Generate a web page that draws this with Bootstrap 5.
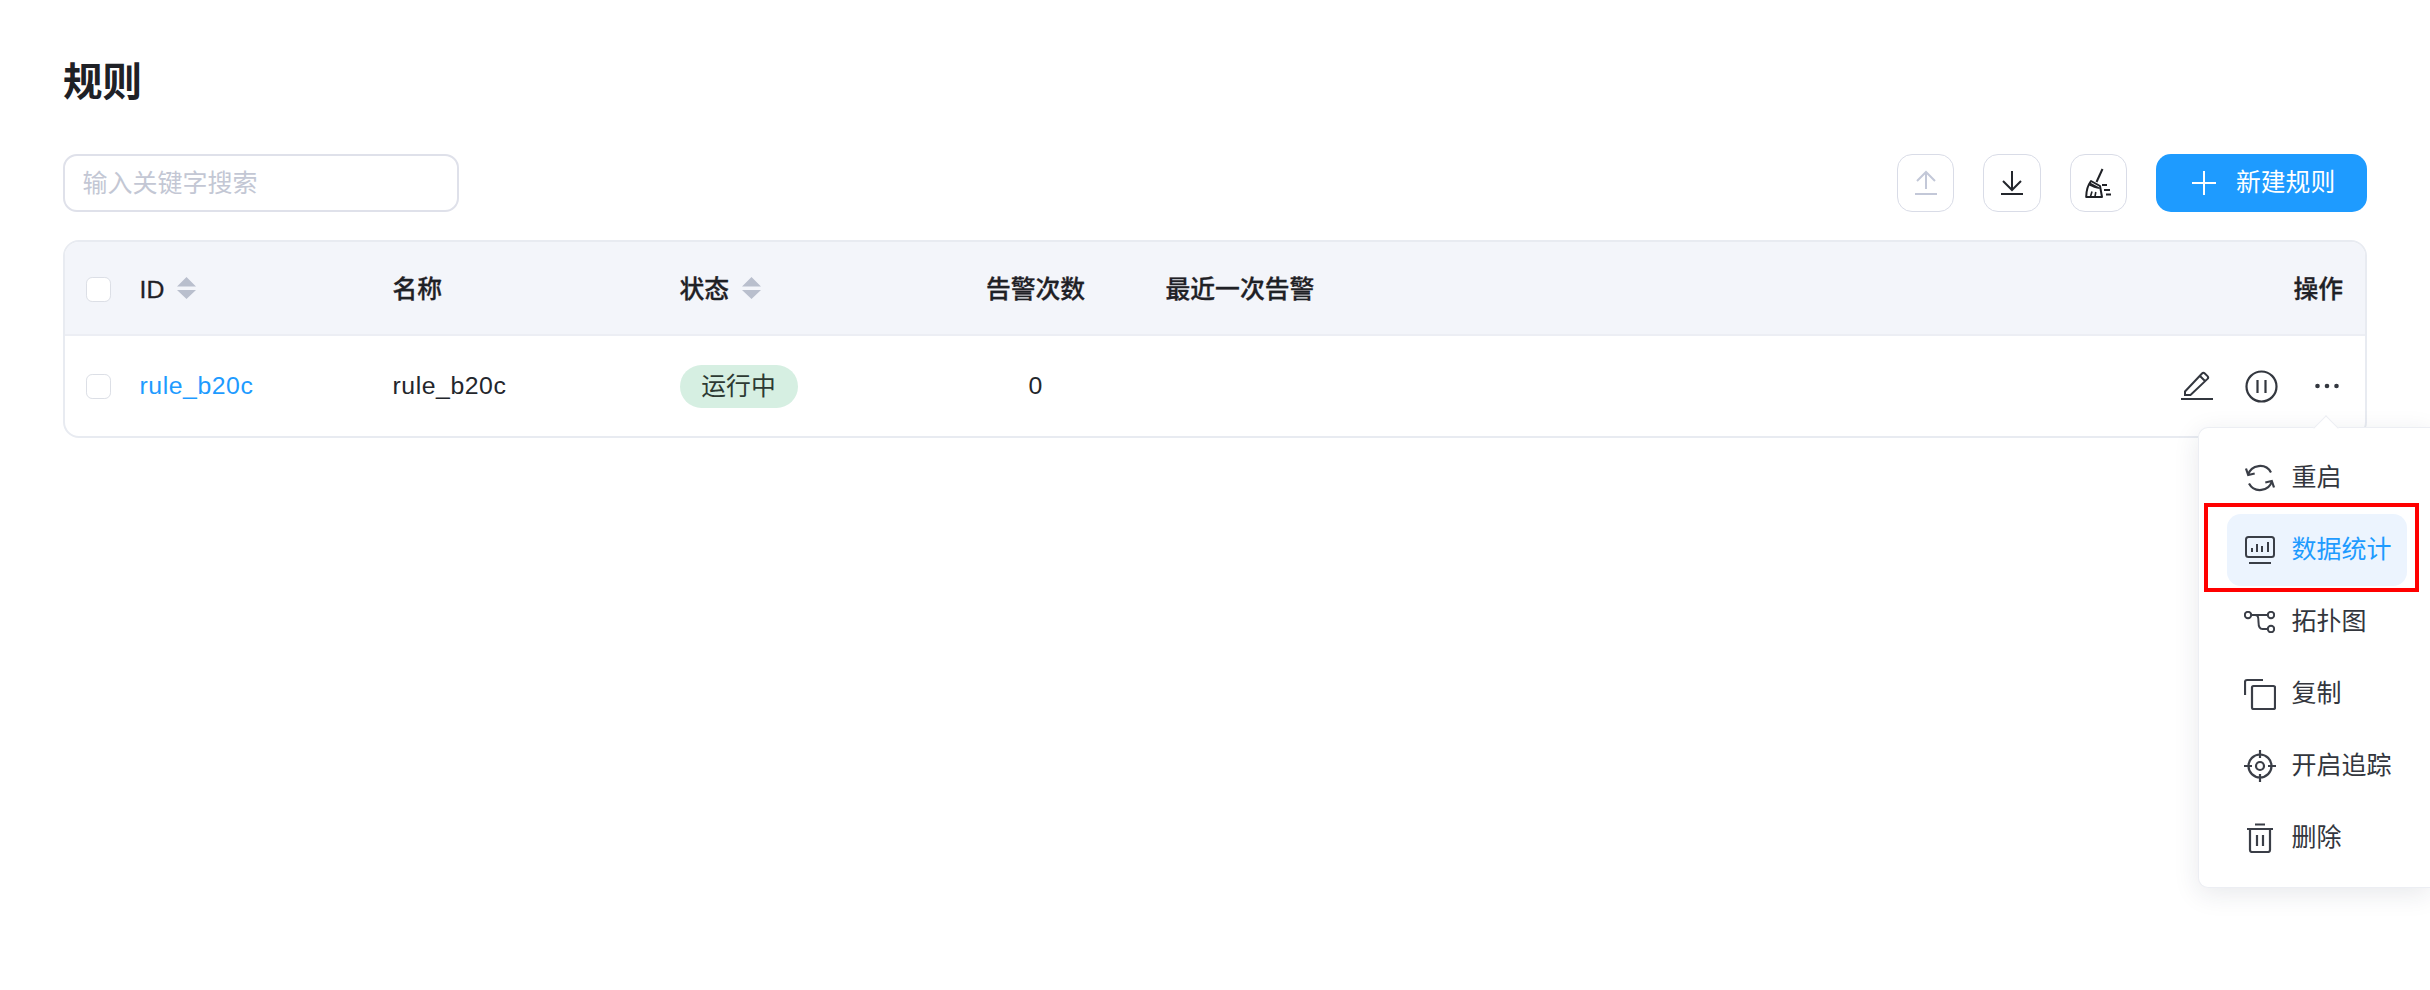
<!DOCTYPE html>
<html lang="zh">
<head>
<meta charset="utf-8">
<title>规则</title>
<link href="https://cdn.jsdelivr.net/npm/bootstrap@5.3.0/dist/css/bootstrap.min.css" rel="stylesheet">
<style>
html,body{height:100%;}
body{font-family:"Liberation Sans","Noto Sans CJK SC",sans-serif;font-size:24.8px;color:#23262c;background:#fff;overflow:hidden;}
.rule-page{position:relative;height:990px;padding:57px 63px 0;}
.rule-title{font-size:39.500px;line-height:50px;font-weight:700;margin:0 0 47px;color:#1f2126;}
.rule-toolbar{height:58px;margin-bottom:28px;}
.rule-search{width:396px;height:58px;border:2px solid #dfe1ea;border-radius:14px;font-size:25px;padding:0 17.500px;color:#23262c;box-shadow:none;}
.rule-search::placeholder{color:#c3c7d4;}
.tool-group{gap:29px;}
.tool-btn{width:57px;height:58px;padding:0;border:1.5px solid #d9dce7;border-radius:15px;background:#fff;display:flex;align-items:center;justify-content:center;}
.tool-wide{width:58px;}
.new-btn{height:58px;width:211px;padding:0 0 0 36px;border:0;border-radius:15px;background:#1e9bff;color:#fff;font-size:24.8px;display:flex;align-items:center;gap:20px;}
.rule-table-wrap{border:2px solid #e8ebf1;border-radius:16px;overflow:hidden;}
.rule-table{margin:0;table-layout:fixed;width:100%;font-size:24.8px;}
.rule-table>thead>tr>th{height:93px;background:#f3f5fa;border-bottom:2px solid #eceef4;font-weight:500;padding:3px 22px 0;vertical-align:middle;color:#1f2126;box-shadow:none;-webkit-text-stroke:.3px #1f2126;}
.rule-table>tbody>tr>td{height:101px;border:0;padding:0 22px;vertical-align:middle;color:#23262c;box-shadow:none;}
.rule-table .cb-col{padding:0 0 0 21px!important;}
.rule-table th.cb-col{padding-top:3px!important;}
.col-a{width:52.500px;}.col-b{width:253px;}.col-c{width:287px;}.col-d{width:306px;}.col-e{width:180px;}
.cell-count{padding-right:58px!important;}
.cell-ops{width:260px;}
.rule-cb{width:25px;height:25px;margin:0;display:block;border:1.5px solid #dcdfe6;border-radius:4px;float:none;}
.latin{letter-spacing:.55px;}
.id-link{color:#1e9bff;text-decoration:none;}
.sort-ico{display:inline-block;vertical-align:-1px;margin-left:13px;}
.state-pill{display:inline-block;background:#d6efe2;color:#2d3a33;font-weight:400;font-size:24.8px;line-height:43px;height:43px;width:118px;text-align:center;padding:0;border-radius:22px;}
.row-actions{padding-right:4px;}
.act-ico{display:block;flex:none;}
.act-edit{margin-right:32px;margin-top:-3px;}
.act-pause{margin-right:37px;}
.pop-menu{position:absolute;left:2198px;right:0;top:427px;height:461px;padding:14px 23px 0 0;margin:0;border:1px solid #eceef3;border-right:0;border-radius:10px 0 0 10px;background:#fff;box-shadow:0 6px 26px rgba(30,40,70,.1);display:block;min-width:0;}
.pop-arrow{position:absolute;left:118px;top:-9px;width:18px;height:18px;background:#fff;transform:rotate(45deg);border-top:1px solid #eceef3;border-left:1px solid #eceef3;}
.pop-item{position:relative;height:72px;margin-left:28px;width:auto;padding:0 0 0 16.500px;display:flex;align-items:center;gap:16px;font-size:25px;color:#33363d;border-radius:14px;background:transparent;}
.pi-ico{flex:none;width:32px;display:flex;justify-content:center;}
.pop-item.hot{background:#ecf4fe;color:#1e9bff;}
.red-box{position:absolute;left:-23px;right:-12px;top:-11px;bottom:-6px;border:4px solid #ff0000;pointer-events:none;}
</style>
</head>
<body>
<div class="rule-page">
  <h1 class="rule-title">规则</h1>
  <div class="rule-toolbar d-flex justify-content-between align-items-center">
    <input class="form-control rule-search" type="text" placeholder="输入关键字搜索">
    <div class="d-flex align-items-center tool-group">
      <button class="btn tool-btn" type="button" aria-label="上传">
        <svg width="24" height="26" viewBox="0 0 24 26" fill="none" stroke="#c3c8d8" stroke-width="2"><path d="M12 19V2M3 11l9-9 9 9M1 24h22"/></svg>
      </button>
      <button class="btn tool-btn tool-wide" type="button" aria-label="下载">
        <svg width="24" height="26" viewBox="0 0 24 26" fill="none" stroke="#23262c" stroke-width="2"><path d="M12 1v19M3 11l9 9 9-9M1 24h22"/></svg>
      </button>
      <button class="btn tool-btn" type="button" aria-label="清空">
        <svg width="28" height="30" viewBox="0 0 28 30" fill="none" stroke="#1f2126" stroke-width="2"><path d="M17.500 1l-6 13"/><path d="M6 13l9 5 2 11H1.200C1.200 23 3 17 6 13z" stroke-linejoin="round"/><path d="M5 14.500l9.500 5 .3 1.500C11 20.500 7 19 4 17.500z" fill="#1f2126" stroke="none"/><path d="M5.500 28.500l1.500-5M10 28.500l.8-4.500" stroke-width="1.600"/><path d="M17 17h5M19 22h6M21 26.500h5"/></svg>
      </button>
      <button class="btn new-btn" type="button">
        <svg width="24" height="24" viewBox="0 0 24 24" fill="none" stroke="#fff" stroke-width="2"><path d="M12 0v24M0 12h24"/></svg>
        <span>新建规则</span>
      </button>
    </div>
  </div>
  <div class="rule-table-wrap">
    <table class="table rule-table">
      <colgroup><col class="col-a"><col class="col-b"><col class="col-c"><col class="col-d"><col class="col-e"><col><col class="cell-ops"></colgroup>
      <thead>
        <tr>
          <th class="cb-col"><input class="form-check-input rule-cb" type="checkbox" aria-label="全选"></th>
          <th>ID<svg class="sort-ico" width="19" height="22" viewBox="0 0 19 22" fill="#b9bfcd"><path d="M9.500 0L19 9.500H0zM0 13h19l-9.500 9z"/></svg></th>
          <th>名称</th>
          <th>状态<svg class="sort-ico" width="19" height="22" viewBox="0 0 19 22" fill="#b9bfcd"><path d="M9.500 0L19 9.500H0zM0 13h19l-9.500 9z"/></svg></th>
          <th class="text-center cell-count">告警次数</th>
          <th>最近一次告警</th>
          <th class="text-end">操作</th>
        </tr>
      </thead>
      <tbody>
        <tr>
          <td class="cb-col"><input class="form-check-input rule-cb" type="checkbox" aria-label="选择"></td>
          <td><a class="id-link latin" href="#">rule_b20c</a></td>
          <td class="latin">rule_b20c</td>
          <td><span class="badge state-pill">运行中</span></td>
          <td class="text-center cell-count">0</td>
          <td></td>
          <td>
            <div class="d-flex justify-content-end align-items-center row-actions">
              <svg class="act-ico act-edit" width="32" height="30" viewBox="0 0 32 30" fill="none" stroke="#33373f" stroke-width="2"><path d="M4 21.500L21 3.500a2 2 0 0 1 2.800 0l2.700 2.600a2 2 0 0 1 0 2.800L9.500 25H4zM19 6l5.500 5.500M0 29h32"/></svg>
              <svg class="act-ico act-pause" width="33" height="33" viewBox="0 0 33 33" fill="none" stroke="#33373f" stroke-width="2.200"><circle cx="16.500" cy="16.500" r="15"/><path d="M12.500 10v13M20.500 10v13"/></svg>
              <svg class="act-ico" width="24" height="6" viewBox="0 0 24 6" fill="#33373f"><circle cx="2.500" cy="3" r="2.300"/><circle cx="12" cy="3" r="2.300"/><circle cx="21.500" cy="3" r="2.300"/></svg>
            </div>
          </td>
        </tr>
      </tbody>
    </table>
  </div>
  <div class="dropdown-menu pop-menu">
    <span class="pop-arrow"></span>
    <div class="dropdown-item pop-item">
      <span class="pi-ico"><svg width="30" height="30" viewBox="0 0 30 30" fill="none" stroke="#3a3e47" stroke-width="2.200"><path d="M3 12A12.500 12.500 0 0 1 26 9.500M27 18A12.500 12.500 0 0 1 4 20.500"/><path d="M1 5.500L3.200 12l6.500-1.500M29 24.500L26.800 18l-6.500 1.500"/></svg></span>
      <span>重启</span>
    </div>
    <div class="dropdown-item pop-item hot">
      <span class="pi-ico"><svg width="30" height="28" viewBox="0 0 30 28" fill="none" stroke="#3a3e47" stroke-width="2"><rect x="1" y="1" width="28" height="20" rx="2.500"/><path d="M7 16v-4M12 16V8M17 16v-6M23 16V6M4 27h22"/></svg></span>
      <span>数据统计</span>
      <span class="red-box"></span>
    </div>
    <div class="dropdown-item pop-item">
      <span class="pi-ico"><svg width="31" height="22" viewBox="0 0 31 22" fill="none" stroke="#3a3e47" stroke-width="2"><circle cx="4" cy="4" r="3.200"/><circle cx="27" cy="4" r="3.200"/><circle cx="27" cy="18" r="3.200"/><path d="M7.200 4h16.600M11 4c3 0 3.500 2 3.500 7s1 7 4 7h5.300"/></svg></span>
      <span>拓扑图</span>
    </div>
    <div class="dropdown-item pop-item">
      <span class="pi-ico"><svg width="32" height="32" viewBox="0 0 32 32" fill="none" stroke="#3a3e47" stroke-width="2.200"><path d="M1 17V4a2 2 0 0 1 2-2h16"/><rect x="8" y="8" width="23" height="23" rx="1.500"/></svg></span>
      <span>复制</span>
    </div>
    <div class="dropdown-item pop-item">
      <span class="pi-ico"><svg width="32" height="32" viewBox="0 0 32 32" fill="none" stroke="#3a3e47" stroke-width="2.200"><circle cx="16" cy="16" r="11.500"/><circle cx="16" cy="16" r="4"/><path d="M16 0v8M16 24v8M0 16h8M24 16h8"/></svg></span>
      <span>开启追踪</span>
    </div>
    <div class="dropdown-item pop-item">
      <span class="pi-ico"><svg width="30" height="30" viewBox="0 0 30 30" fill="none" stroke="#3a3e47" stroke-width="2.200"><path d="M2 6h26M10 1.500h10M5 6v21a2 2 0 0 0 2 2h16a2 2 0 0 0 2-2V6M12 12v11M18 12v11"/></svg></span>
      <span>删除</span>
    </div>
  </div>
</div>
<script src="https://cdn.jsdelivr.net/npm/bootstrap@5.3.0/dist/js/bootstrap.bundle.min.js"></script>
</body>
</html>
